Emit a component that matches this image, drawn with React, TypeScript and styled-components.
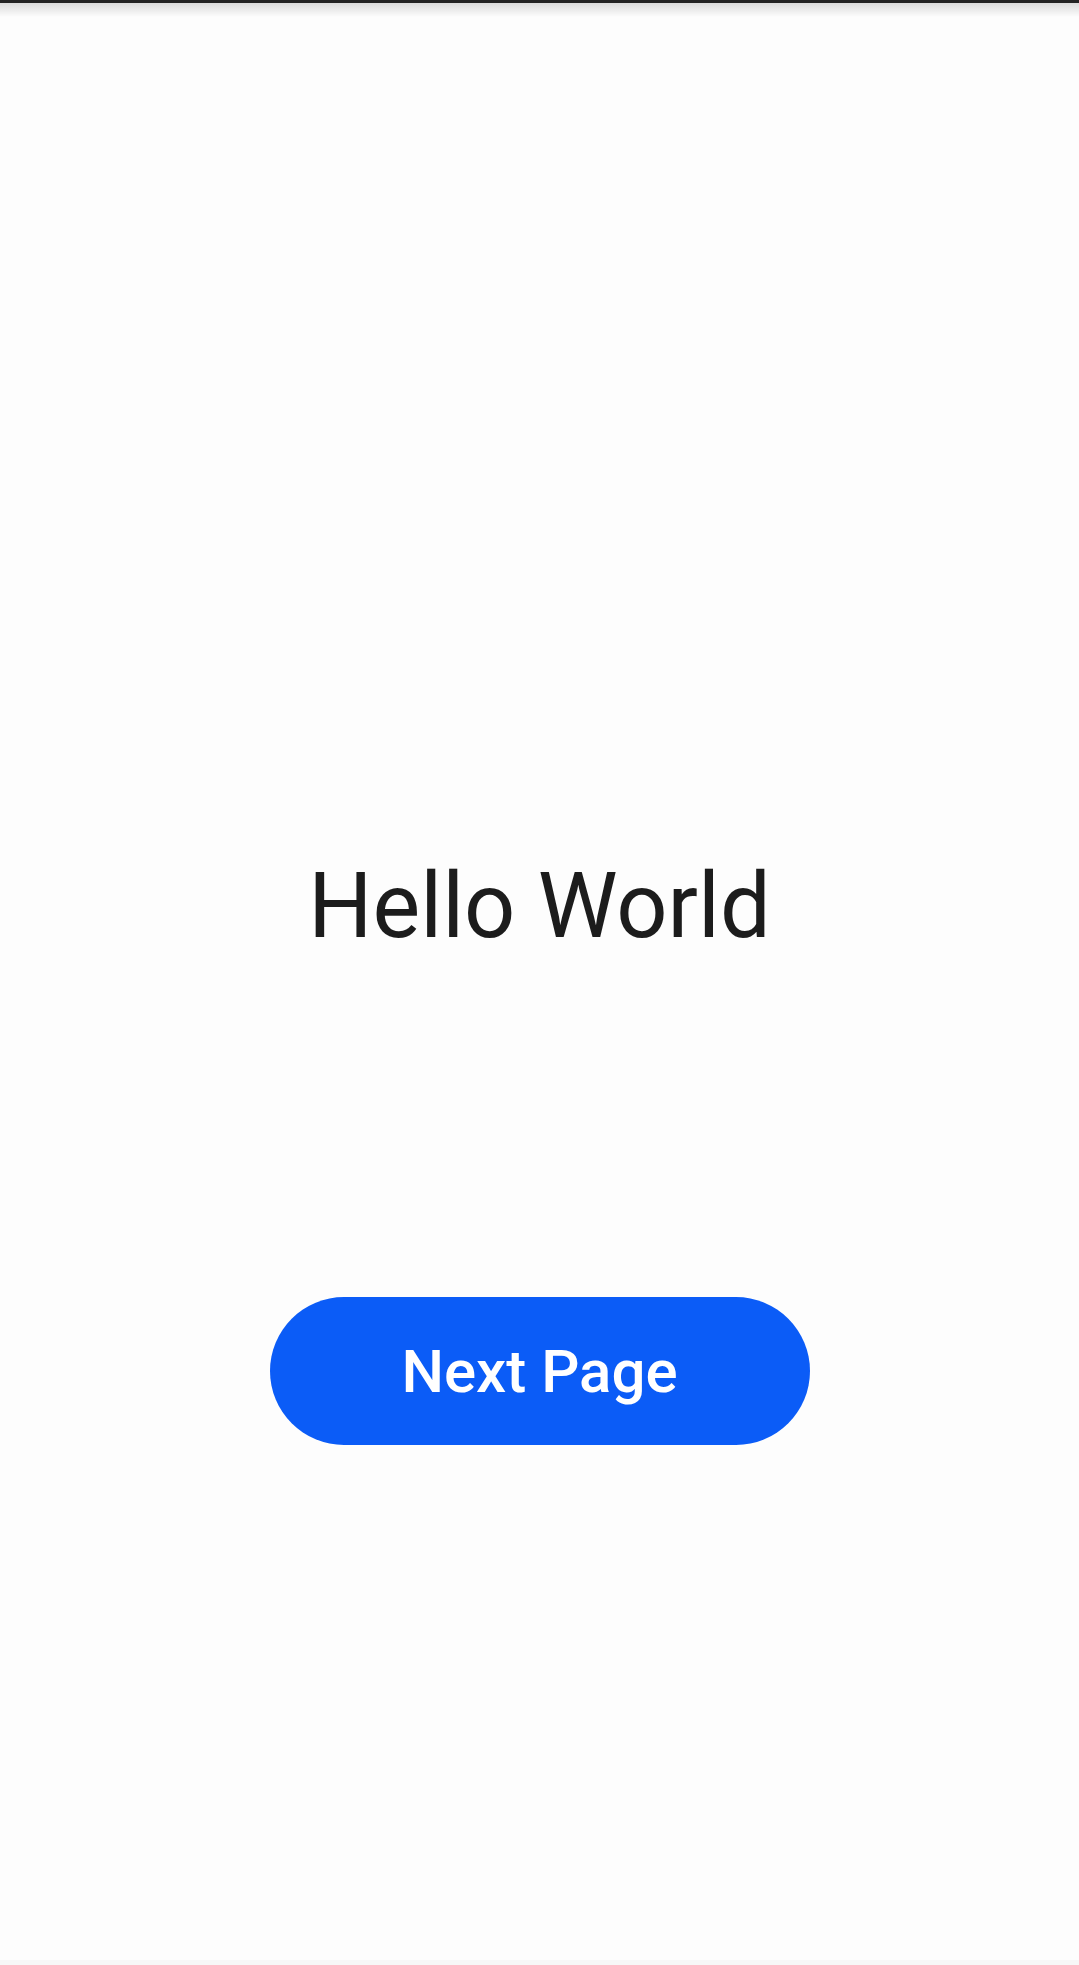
import React from "react"
import styled, { createGlobalStyle } from "styled-components"

const GlobalStyle = createGlobalStyle`
  html, body {
    margin: 0;
    padding: 0;
    background: #fdfdfd;
  }
  * {
    box-sizing: border-box;
  }
`

const Screen = styled.div`
  min-height: 100vh;
  display: flex;
  flex-direction: column;
  background: #fdfdfd;
  font-family: Roboto, "Noto Sans", sans-serif;
`

const StatusBar = styled.div`
  height: 3px;
  background: #222222;
  position: relative;
  z-index: 1;

  &::after {
    content: "";
    position: absolute;
    left: 0;
    right: 0;
    top: 3px;
    height: 14px;
    background: linear-gradient(rgba(0, 0, 0, 0.14), rgba(0, 0, 0, 0));
  }
`

const Body = styled.main`
  flex: 1;
  display: flex;
  flex-direction: column;
  align-items: center;
  padding-top: 851px;
`

const Title = styled.h1`
  margin: 0;
  font-size: 90px;
  line-height: 106px;
  font-weight: 400;
  color: #1c1c1c;
`

const NextButton = styled.button`
  margin-top: 337px;
  width: 540px;
  height: 148px;
  border: none;
  border-radius: 74px;
  background: #0b5cf7;
  color: #ffffff;
  font-family: Roboto, "Noto Sans", sans-serif;
  font-size: 60px;
  font-weight: 500;
  display: flex;
  align-items: center;
  justify-content: center;
  cursor: pointer;
`

const NavBar = styled.div`
  height: 5px;
  background: #f7f7f7;
`

const App: React.FC = () => {
  return (
    <>
      <GlobalStyle />
      <Screen>
        <StatusBar />
        <Body>
          <Title>Hello World</Title>
          <NextButton>Next Page</NextButton>
        </Body>
        <NavBar />
      </Screen>
    </>
  )
}

export default App
